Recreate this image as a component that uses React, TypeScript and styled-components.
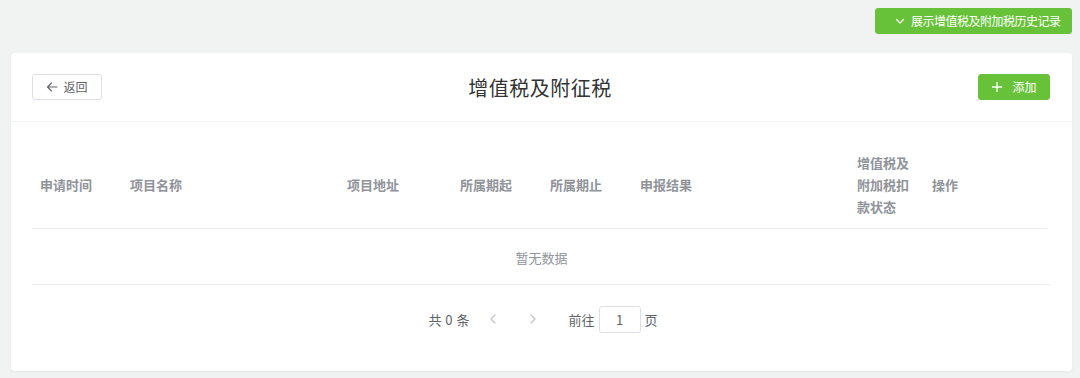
import React from "react";
import styled, { createGlobalStyle } from "styled-components";

const Global = createGlobalStyle`
  html, body { margin: 0; padding: 0; background: #f1f2f2; }
  body { font-family: "Noto Sans CJK SC", "Noto Sans", "Liberation Sans", sans-serif; }
  * { box-sizing: border-box; }
`;

const Page = styled.div`
  width: 1080px;
  height: 378px;
  padding: 8px 8px 0 11px;
  overflow: hidden;
`;

const TopBar = styled.div`
  display: flex;
  justify-content: flex-end;
`;

const HistoryButton = styled.button`
  display: inline-flex;
  align-items: center;
  gap: 5px;
  height: 26px;
  width: 197px;
  padding: 0 0 0 18px;
  background: #67c23a;
  border: 1px solid #67c23a;
  border-radius: 3px;
  color: #fff;
  font-size: 12px;
  letter-spacing: -0.5px;
  font-family: inherit;
  line-height: 1;
`;

const AddButton = styled.button`
  display: inline-flex;
  align-items: center;
  justify-content: center;
  gap: 9px;
  height: 26px;
  width: 72px;
  background: #67c23a;
  border: 1px solid #67c23a;
  border-radius: 3px;
  color: #fff;
  font-size: 12px;
  font-family: inherit;
  line-height: 1;
`;

const Card = styled.div`
  margin-top: 19px;
  height: 318px;
  background: #fff;
  border-radius: 4px;
  box-shadow: 0 1px 3px rgba(0, 0, 0, 0.05);
  display: flex;
  flex-direction: column;
`;

const CardHeader = styled.div`
  height: 69px;
  padding: 0 22px 0 21px;
  display: flex;
  align-items: center;
  justify-content: space-between;
  border-bottom: 1px solid #f2f3f5;
`;

const BackButton = styled.button`
  display: inline-flex;
  align-items: center;
  justify-content: center;
  gap: 5px;
  width: 70px;
  height: 26px;
  background: #fff;
  border: 1px solid #dcdfe6;
  border-radius: 3px;
  color: #606266;
  font-size: 12px;
  font-family: inherit;
  line-height: 1;
`;

const Title = styled.h1`
  margin: 0;
  font-size: 20px;
  font-weight: 400;
  color: #333;
  letter-spacing: 0.5px;
`;

const TableArea = styled.div`
  padding: 20px 21px 0 21px;
`;

const HeaderRow = styled.div`
  display: flex;
  height: 87px;
  align-items: center;
  border-bottom: 1px solid #ebeef5;
  margin-right: 3px;
`;

const HeadCell = styled.div<{ $w?: number }>`
  ${(p) => (p.$w ? `width: ${p.$w}px; flex: none;` : "flex: 1;")}
  padding: 0 8px;
  font-size: 13px;
  font-weight: 700;
  color: #909399;
  line-height: 22px;
  text-align: left;
`;

const EmptyRow = styled.div`
  height: 56px;
  display: flex;
  align-items: center;
  justify-content: center;
  border-bottom: 1px solid #ebeef5;
  font-size: 13px;
  color: #909399;
  padding-top: 2px;
`;

const Pager = styled.div`
  margin-top: 20px;
  display: flex;
  align-items: center;
  justify-content: center;
  font-size: 13px;
  color: #606266;
  height: 28px;
  padding-left: 3px;
`;

const Total = styled.span`
  margin-right: 3px;
  word-spacing: 1px;
`;

const ArrowBtn = styled.span`
  display: inline-flex;
  align-items: center;
  justify-content: center;
  width: 30px;
  height: 28px;
  margin: 0 5px;
  color: #c0c4cc;
`;

const Jump = styled.span`
  display: inline-flex;
  align-items: center;
  gap: 4px;
  margin-left: 16px;
`;

const PageInput = styled.div`
  width: 42px;
  height: 27px;
  border: 1px solid #dcdfe6;
  border-radius: 3px;
  display: flex;
  align-items: center;
  justify-content: center;
  color: #606266;
  font-size: 13px;
`;

const Chevron = ({ dir }: { dir: "down" | "left" | "right" }) => {
  const d =
    dir === "down" ? "M2.5 4.5 L6 8 L9.5 4.5" : dir === "left" ? "M8 2 L4 6 L8 10" : "M4 2 L8 6 L4 10";
  return (
    <svg width="12" height="12" viewBox="0 0 12 12" fill="none">
      <path d={d} stroke="currentColor" strokeWidth="1.2" strokeLinecap="round" strokeLinejoin="round" />
    </svg>
  );
};

const ArrowLeft = () => (
  <svg width="12" height="12" viewBox="0 0 12 12" fill="none">
    <path d="M11 6 H1.5 M5.5 2 L1.5 6 L5.5 10" stroke="currentColor" strokeWidth="1.1" strokeLinecap="round" strokeLinejoin="round" />
  </svg>
);

const Plus = () => (
  <svg width="12" height="12" viewBox="0 0 12 12" fill="none">
    <path d="M6 1 V11 M1 6 H11" stroke="currentColor" strokeWidth="1.3" />
  </svg>
);

const headers: { label: string; w?: number }[] = [
  { label: "申请时间", w: 90 },
  { label: "项目名称", w: 217 },
  { label: "项目地址", w: 113 },
  { label: "所属期起", w: 90 },
  { label: "所属期止", w: 90 },
  { label: "申报结果", w: 217 },
  { label: "增值税及附加税扣款状态", w: 75 },
  { label: "操作" },
];

export default function App() {
  return (
    <>
      <Global />
      <Page>
        <TopBar>
          <HistoryButton>
            <Chevron dir="down" />
            展示增值税及附加税历史记录
          </HistoryButton>
        </TopBar>
        <Card>
          <CardHeader>
            <BackButton>
              <ArrowLeft />
              返回
            </BackButton>
            <Title>增值税及附征税</Title>
            <AddButton>
              <Plus />
              添加
            </AddButton>
          </CardHeader>
          <TableArea>
            <HeaderRow>
              {headers.map((h) => (
                <HeadCell key={h.label} $w={h.w}>
                  {h.label}
                </HeadCell>
              ))}
            </HeaderRow>
            <EmptyRow>暂无数据</EmptyRow>
            <Pager>
              <Total>共 0 条</Total>
              <ArrowBtn>
                <Chevron dir="left" />
              </ArrowBtn>
              <ArrowBtn>
                <Chevron dir="right" />
              </ArrowBtn>
              <Jump>
                前往
                <PageInput>1</PageInput>
                页
              </Jump>
            </Pager>
          </TableArea>
        </Card>
      </Page>
    </>
  );
}
